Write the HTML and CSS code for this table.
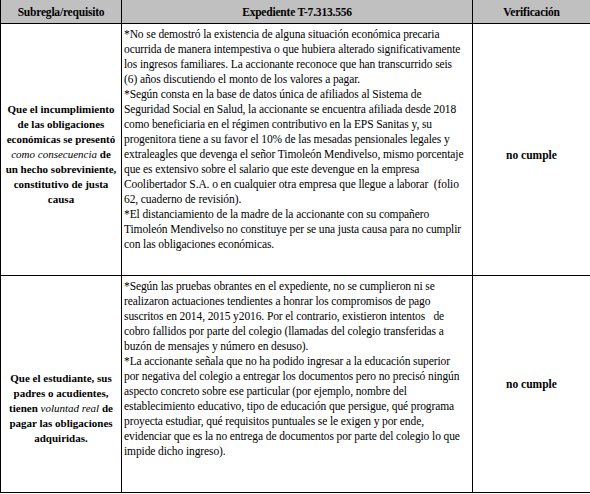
FILE: index.html
```html
<!DOCTYPE html>
<html lang="es">
<head>
	<meta charset="UTF-8">
	<title>Subregla y requisito</title>
	<link rel="stylesheet" href="styles.css">
</head>
<body>
	<table class="tabla">
		<colgroup>
			<col class="c-req">
			<col class="c-exp">
			<col class="c-ver">
		</colgroup>
		<thead>
			<tr>
				<th>Subregla/requisito</th>
				<th>Expediente T-7.313.556</th>
				<th>Verificación</th>
			</tr>
		</thead>
		<tbody>
			<tr class="fila-1">
				<td class="req">Que el incumplimiento<br>de las obligaciones<br>económicas se presentó<br><em>como consecuencia</em> de<br>un hecho sobreviniente,<br>constitutivo de justa<br>causa</td>
				<td class="exp">
					<p>*No se demostró la existencia de alguna situación económica precaria<br>ocurrida de manera intempestiva o que hubiera alterado significativamente<br>los ingresos familiares. La accionante reconoce que han transcurrido seis<br>(6) años discutiendo el monto de los valores a pagar.</p>
					<p>*Según consta en la base de datos única de afiliados al Sistema de<br>Seguridad Social en Salud, la accionante se encuentra afiliada desde 2018<br>como beneficiaria en el régimen contributivo en la EPS Sanitas y, su<br>progenitora tiene a su favor el 10% de las mesadas pensionales legales y<br>extraleagles que devenga el señor Timoleón Mendivelso, mismo porcentaje<br>que es extensivo sobre el salario que este devengue en la empresa<br>Coolibertador S.A. o en cualquier otra empresa que llegue a laborar &nbsp;(folio<br>62, cuaderno de revisión).</p>
					<p>*El distanciamiento de la madre de la accionante con su compañero<br>Timoleón Mendivelso no constituye per se una justa causa para no cumplir<br>con las obligaciones económicas.</p>
				</td>
				<td class="ver">no cumple</td>
			</tr>
			<tr class="fila-2">
				<td class="req">Que el estudiante, sus<br>padres o acudientes,<br>tienen <em>voluntad real</em> de<br>pagar las obligaciones<br>adquiridas.</td>
				<td class="exp">
					<p>*Según las pruebas obrantes en el expediente, no se cumplieron ni se<br>realizaron actuaciones tendientes a honrar los compromisos de pago<br>suscritos en 2014, 2015 y2016. Por el contrario, existieron intentos &nbsp; de<br>cobro fallidos por parte del colegio (llamadas del colegio transferidas a<br>buzón de mensajes y número en desuso).</p>
					<p>*La accionante señala que no ha podido ingresar a la educación superior<br>por negativa del colegio a entregar los documentos pero no precisó ningún<br>aspecto concreto sobre ese particular (por ejemplo, nombre del<br>establecimiento educativo, tipo de educación que persigue, qué programa<br>proyecta estudiar, qué requisitos puntuales se le exigen y por ende,<br>evidenciar que es la no entrega de documentos por parte del colegio lo que<br>impide dicho ingreso).</p>
				</td>
				<td class="ver">no cumple</td>
			</tr>
		</tbody>
	</table>
</body>
</html>
```

FILE: styles.css
```css
* {
  margin: 0;
  padding: 0;
}
body {
  background: #fff;
  color: #000;
  font-family: "Liberation Serif", Tinos, "Times New Roman", serif;
  font-size: 11.5px;
}
.tabla {
  width: 590px;
  border-collapse: collapse;
  table-layout: fixed;
  margin-top: -1px;
}
.c-req { width: 121px; }
.c-exp { width: 351px; }
.c-ver { width: 118px; }
.tabla th,
.tabla td {
  border: 1px solid #000;
  font-family: "Liberation Serif", Tinos, "Times New Roman", serif;
  font-size: 11.5px;
  white-space: nowrap;
  overflow: hidden;
}
.tabla th {
  height: 23px;
  background: #c0c0c0;
  font-weight: bold;
  letter-spacing: -0.2px;
  text-align: center;
  vertical-align: middle;
}
.fila-1 { height: 252px; }
.fila-2 { height: 217px; }
.tabla .req {
  font-size: 11px;
  font-weight: bold;
  text-align: center;
  vertical-align: middle;
  line-height: 15px;
}
.req em { font-weight: normal; }
.fila-1 .req { padding-top: 10px; }
.fila-2 .req { padding-top: 48px; }
.exp {
  vertical-align: top;
  line-height: 15px;
  letter-spacing: -0.1px;
  padding: 3px 2px;
}
.ver {
  font-weight: bold;
  text-align: center;
  vertical-align: middle;
}
.fila-1 .ver { padding-top: 10px; }
```
